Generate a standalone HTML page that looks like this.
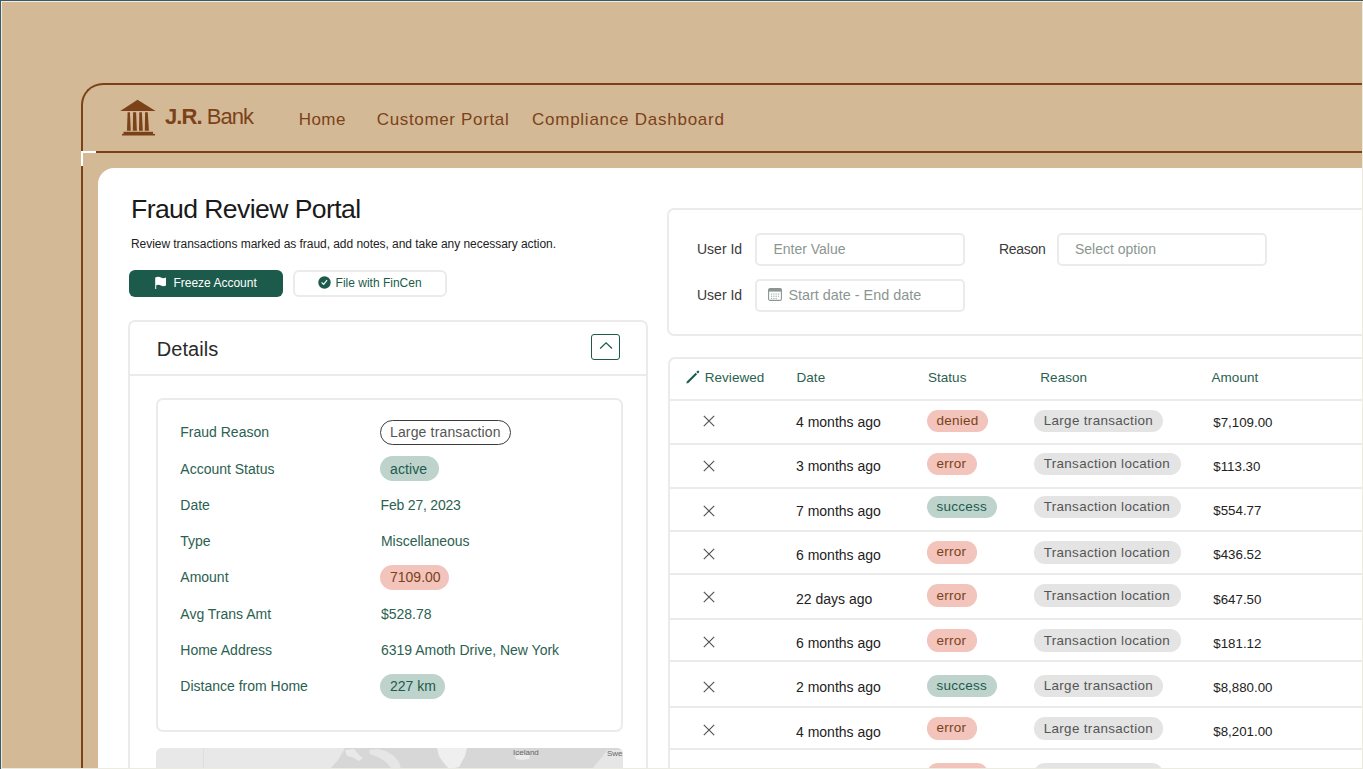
<!DOCTYPE html>
<html><head><meta charset="utf-8"><style>
html,body{margin:0;padding:0;}
body{width:1363px;height:769px;overflow:hidden;position:relative;background:#d4b996;font-family:"Liberation Sans",sans-serif;}
.t{position:absolute;white-space:nowrap;}
.r{position:absolute;}
</style></head><body>
<div class="r" style="left:81px;top:83px;width:1400px;height:800px;border-top:2px solid #7b421a;border-left:2px solid #7b421a;border-top-left-radius:22px;box-sizing:border-box"></div>
<div class="r" style="left:81px;top:151px;width:1400px;height:2px;background:#7b421a"></div>
<div class="r" style="left:81px;top:151px;width:15px;height:2px;background:#fff"></div>
<div class="r" style="left:81px;top:151px;width:2px;height:15px;background:#fff"></div>
<div class="r" style="left:98px;top:168px;width:1400px;height:700px;background:#fff;border-top-left-radius:16px"></div>
<svg class="r" style="left:115px;top:95px" width="45" height="45" viewBox="0 0 45 45">
<polygon points="22.5,4.8 40.6,15.9 5.2,15.9" fill="#7b421a"/>
<polygon points="12.6,17.2 14.9,17.2 15.8,35.8 12.0,35.8" fill="#7b421a"/>
<polygon points="18.1,17.2 21.1,17.2 21.9,35.8 17.8,35.8" fill="#7b421a"/>
<polygon points="24.3,17.2 26.9,17.2 27.8,35.8 24.0,35.8" fill="#7b421a"/>
<polygon points="30.1,17.2 32.8,17.2 33.9,35.8 29.8,35.8" fill="#7b421a"/>
<rect x="8.5" y="36.8" width="29.5" height="2.2" fill="#7b421a"/>
<rect x="7" y="38.9" width="33" height="1.6" fill="#7b421a"/>
</svg>
<div class="t" style="left:165px;top:105.98px;font-size:22px;line-height:22px;color:#7b421a;font-weight:400;letter-spacing:-0.95px;"><b>J.R.</b> Bank</div>
<div class="t" style="left:298.8px;top:110.71px;font-size:17px;line-height:17px;color:#7b421a;font-weight:400;letter-spacing:0.4px;">Home</div>
<div class="t" style="left:376.8px;top:110.71px;font-size:17px;line-height:17px;color:#7b421a;font-weight:400;letter-spacing:0.65px;">Customer Portal</div>
<div class="t" style="left:532px;top:110.71px;font-size:17px;line-height:17px;color:#7b421a;font-weight:400;letter-spacing:0.75px;">Compliance Dashboard</div>
<div class="t" style="left:131px;top:196.28px;font-size:26.6px;line-height:26.6px;color:#1a1a1a;font-weight:400;letter-spacing:-0.6px;">Fraud Review Portal</div>
<div class="t" style="left:131px;top:238.14px;font-size:12px;line-height:12px;color:#222;font-weight:400;letter-spacing:-0.05px;">Review transactions marked as fraud, add notes, and take any necessary action.</div>
<div class="r" style="left:129px;top:269.8px;width:154px;height:27.4px;background:#1c5b4c;border-radius:6px"></div>
<svg class="r" style="left:154px;top:276px" width="14" height="14" viewBox="0 0 14 14">
<path d="M1.2,1.6 C3.5,0.4 5.5,0.6 7,1.5 C8.6,2.4 10.2,2.3 12,1.6 L12,9.6 C10.2,10.3 8.6,10.4 7,9.5 C5.5,8.6 3.5,8.4 2.2,9.3 L2.2,13 L1.2,13 Z" fill="#fff"/>
</svg>
<div class="t" style="left:173.4px;top:276.84px;font-size:12px;line-height:12px;color:#fff;font-weight:400;letter-spacing:0.0px;">Freeze Account</div>
<div class="r" style="left:293px;top:269.8px;width:154px;height:27.4px;border:2px solid #ebebeb;border-radius:6px;box-sizing:border-box;background:#fff"></div>
<svg class="r" style="left:318px;top:276px" width="13" height="13" viewBox="0 0 13 13">
<circle cx="6.5" cy="6.5" r="6.2" fill="#1c5b4c"/>
<path d="M3.6,6.3 L5.6,8.3 L9.1,4.1" stroke="#fff" stroke-width="1.15" fill="none"/>
</svg>
<div class="t" style="left:335.6px;top:276.84px;font-size:12px;line-height:12px;color:#1c5b4c;font-weight:400;letter-spacing:0px;">File with FinCen</div>
<div class="r" style="left:128px;top:319.5px;width:520px;height:500px;border:2px solid #ebebeb;border-radius:7px;box-sizing:border-box"></div>
<div class="r" style="left:128px;top:374px;width:520px;height:2px;background:#ebebeb"></div>
<div class="t" style="left:156.8px;top:339.27px;font-size:20px;line-height:20px;color:#2a2a2a;font-weight:400;letter-spacing:0.05px;">Details</div>
<div class="r" style="left:591px;top:334px;width:29px;height:26px;border:1.3px solid #1c5b4c;border-radius:3px;box-sizing:border-box"></div>
<svg class="r" style="left:598px;top:340px" width="16" height="12" viewBox="0 0 16 12">
<path d="M2.1,8.5 L8.1,2.8 L14,8.5" stroke="#1c5b4c" stroke-width="1.2" fill="none"/>
</svg>
<div class="r" style="left:156px;top:398px;width:467px;height:334px;border:2px solid #ebebeb;border-radius:7px;box-sizing:border-box"></div>
<div class="t" style="left:180.3px;top:425.25px;font-size:14px;line-height:14px;color:#2b6150;font-weight:400;letter-spacing:0px;">Fraud Reason</div>
<div class="t" style="left:180.3px;top:461.55px;font-size:14px;line-height:14px;color:#2b6150;font-weight:400;letter-spacing:0px;">Account Status</div>
<div class="t" style="left:180.3px;top:497.85px;font-size:14px;line-height:14px;color:#2b6150;font-weight:400;letter-spacing:0px;">Date</div>
<div class="t" style="left:180.3px;top:534.15px;font-size:14px;line-height:14px;color:#2b6150;font-weight:400;letter-spacing:0px;">Type</div>
<div class="t" style="left:180.3px;top:570.45px;font-size:14px;line-height:14px;color:#2b6150;font-weight:400;letter-spacing:0px;">Amount</div>
<div class="t" style="left:180.3px;top:606.75px;font-size:14px;line-height:14px;color:#2b6150;font-weight:400;letter-spacing:0px;">Avg Trans Amt</div>
<div class="t" style="left:180.3px;top:643.05px;font-size:14px;line-height:14px;color:#2b6150;font-weight:400;letter-spacing:0px;">Home Address</div>
<div class="t" style="left:180.3px;top:679.35px;font-size:14px;line-height:14px;color:#2b6150;font-weight:400;letter-spacing:0px;">Distance from Home</div>
<div class="r" style="left:380px;top:420px;width:131px;height:25px;border:1.3px solid #3d3d3d;border-radius:13px;box-sizing:border-box"></div>
<div class="t" style="left:390px;top:425.25px;font-size:14px;line-height:14px;color:#555;font-weight:400;letter-spacing:0.15px;">Large transaction</div>
<div class="r" style="left:380px;top:456px;width:59px;height:25px;background:#bdd3cc;border-radius:13px"></div>
<div class="t" style="left:390px;top:461.55px;font-size:14px;line-height:14px;color:#1c5b4c;font-weight:400;letter-spacing:0.1px;">active</div>
<div class="t" style="left:380.6px;top:497.85px;font-size:14px;line-height:14px;color:#2b6150;font-weight:400;letter-spacing:-0.2px;">Feb 27, 2023</div>
<div class="t" style="left:380.9px;top:534.15px;font-size:14px;line-height:14px;color:#2b6150;font-weight:400;letter-spacing:0px;">Miscellaneous</div>
<div class="r" style="left:380px;top:565px;width:68.5px;height:25px;background:#f2c4bb;border-radius:13px"></div>
<div class="t" style="left:390px;top:570.45px;font-size:14px;line-height:14px;color:#7b421a;font-weight:400;letter-spacing:0px;">7109.00</div>
<div class="t" style="left:380.9px;top:606.75px;font-size:14px;line-height:14px;color:#2b6150;font-weight:400;letter-spacing:0px;">$528.78</div>
<div class="t" style="left:380.9px;top:643.05px;font-size:14px;line-height:14px;color:#2b6150;font-weight:400;letter-spacing:0px;">6319 Amoth Drive, New York</div>
<div class="r" style="left:380px;top:674px;width:64.5px;height:25px;background:#bdd3cc;border-radius:13px"></div>
<div class="t" style="left:390px;top:679.35px;font-size:14px;line-height:14px;color:#1c5b4c;font-weight:400;letter-spacing:0px;">227 km</div>
<div class="r" style="left:156px;top:748px;width:467px;height:21px;border-radius:6px 6px 0 0;overflow:hidden;background:#e8e8e8">
<svg width="467" height="21" viewBox="0 0 467 21" style="display:block">
<rect x="0" y="0" width="467" height="21" fill="#e8e8e8"/>
<line x1="47.5" y1="0" x2="47.5" y2="21" stroke="#dadada" stroke-width="0.8"/>
<polygon points="189,0 467,0 467,21 174,21 182,12" fill="#d7d7d7"/>
<polygon points="189,2 198,1 204,8 207,10 203,13 196,9 191,8" fill="#e9e9e9"/>
<polygon points="213,2 222,1 230,3 238,8 243,14 245,21 236,21 230,14 222,9 214,6" fill="#e6e6e6"/>
<polygon points="281,0 311,0 309,8 303,19 293,21 287,14 283,8" fill="#efefef"/>
<polygon points="359,8 366,6 374,7 373,11 365,12 360,11" fill="#ebebeb"/>
<polygon points="436,21 446,9 451,2 467,2 467,21" fill="#e6e6e6"/>
<text x="357" y="7" font-family="Liberation Sans" font-size="8" fill="#666">Iceland</text>
<text x="451" y="8" font-family="Liberation Sans" font-size="8" fill="#666">Swe</text>
</svg></div>
<div class="r" style="left:667px;top:208px;width:800px;height:128px;border:2px solid #ebebeb;border-radius:7px;box-sizing:border-box"></div>
<div class="t" style="left:697px;top:242.15px;font-size:14px;line-height:14px;color:#3a3a3a;font-weight:400;letter-spacing:0px;">User Id</div>
<div class="r" style="left:755px;top:232.5px;width:210px;height:33px;border:2px solid #ebebeb;border-radius:5px;box-sizing:border-box"></div>
<div class="t" style="left:773.4px;top:242.15px;font-size:14px;line-height:14px;color:#8c9691;font-weight:400;letter-spacing:0px;">Enter Value</div>
<div class="t" style="left:999px;top:242.15px;font-size:14px;line-height:14px;color:#3a3a3a;font-weight:400;letter-spacing:-0.3px;">Reason</div>
<div class="r" style="left:1057px;top:232.5px;width:210px;height:33px;border:2px solid #ebebeb;border-radius:5px;box-sizing:border-box"></div>
<div class="t" style="left:1075px;top:242.15px;font-size:14px;line-height:14px;color:#8c9691;font-weight:400;letter-spacing:0px;">Select option</div>
<div class="t" style="left:697px;top:287.95px;font-size:14px;line-height:14px;color:#3a3a3a;font-weight:400;letter-spacing:0px;">User Id</div>
<div class="r" style="left:755px;top:278.5px;width:210px;height:33px;border:2px solid #ebebeb;border-radius:5px;box-sizing:border-box"></div>
<svg class="r" style="left:768px;top:288px" width="14" height="13" viewBox="0 0 14 13">
<rect x="0.6" y="0.6" width="12.8" height="11.8" rx="1.5" fill="none" stroke="#8c9691" stroke-width="1.1"/>
<rect x="0.6" y="0.6" width="12.8" height="3" fill="#8c9691"/>
<g fill="#9aa39f"><rect x="3" y="5.5" width="1.2" height="1"/><rect x="5.3" y="5.5" width="1.2" height="1"/><rect x="7.6" y="5.5" width="1.2" height="1"/><rect x="9.9" y="5.5" width="1.2" height="1"/>
<rect x="3" y="7.7" width="1.2" height="1"/><rect x="5.3" y="7.7" width="1.2" height="1"/><rect x="7.6" y="7.7" width="1.2" height="1"/><rect x="9.9" y="7.7" width="1.2" height="1"/>
<rect x="3" y="9.9" width="1.2" height="1"/><rect x="5.3" y="9.9" width="1.2" height="1"/><rect x="7.6" y="9.9" width="1.2" height="1"/></g>
</svg>
<div class="t" style="left:788.4px;top:287.61px;font-size:14.4px;line-height:14.4px;color:#8c9691;font-weight:400;letter-spacing:0px;">Start date - End date</div>
<div class="r" style="left:668px;top:357px;width:800px;height:500px;border:2px solid #ebebeb;border-radius:7px;box-sizing:border-box"></div>
<div class="r" style="left:668px;top:399px;width:800px;height:2px;background:#ebebeb"></div>
<div class="r" style="left:668px;top:443px;width:800px;height:2px;background:#ebebeb"></div>
<div class="r" style="left:668px;top:487px;width:800px;height:2px;background:#ebebeb"></div>
<div class="r" style="left:668px;top:530px;width:800px;height:2px;background:#ebebeb"></div>
<div class="r" style="left:668px;top:573px;width:800px;height:2px;background:#ebebeb"></div>
<div class="r" style="left:668px;top:618px;width:800px;height:2px;background:#ebebeb"></div>
<div class="r" style="left:668px;top:660px;width:800px;height:2px;background:#ebebeb"></div>
<div class="r" style="left:668px;top:706px;width:800px;height:2px;background:#ebebeb"></div>
<div class="r" style="left:668px;top:748px;width:800px;height:2px;background:#ebebeb"></div>
<svg class="r" style="left:686px;top:370px" width="14" height="14" viewBox="0 0 14 14">
<path d="M0.4,13.4 L0.9,11.4 L9.6,2.7 L11.1,4.2 L2.4,12.9 Z" fill="#1c5b4c"/>
<path d="M10.3,2.0 L11.6,0.7 Q12.3,0.3 12.9,0.9 Q13.5,1.6 13.0,2.3 L11.8,3.5 Z" fill="#1c5b4c"/>
</svg>
<div class="t" style="left:704.7px;top:370.67px;font-size:13.5px;line-height:13.5px;color:#2b6150;font-weight:400;letter-spacing:0.05px;">Reviewed</div>
<div class="t" style="left:796.5px;top:370.67px;font-size:13.5px;line-height:13.5px;color:#2b6150;font-weight:400;letter-spacing:0.05px;">Date</div>
<div class="t" style="left:927.9px;top:370.67px;font-size:13.5px;line-height:13.5px;color:#2b6150;font-weight:400;letter-spacing:0.05px;">Status</div>
<div class="t" style="left:1040.3px;top:370.67px;font-size:13.5px;line-height:13.5px;color:#2b6150;font-weight:400;letter-spacing:0.05px;">Reason</div>
<div class="t" style="left:1211.5px;top:370.67px;font-size:13.5px;line-height:13.5px;color:#2b6150;font-weight:400;letter-spacing:0.05px;">Amount</div>
<svg class="r" style="left:703.2px;top:414.5px" width="12" height="12" viewBox="0 0 12 12">
<path d="M0.8,0.8 L11.2,11.2 M11.2,0.8 L0.8,11.2" stroke="#555" stroke-width="1.2"/></svg>
<div class="t" style="left:796px;top:415.15px;font-size:14px;line-height:14px;color:#222;font-weight:400;letter-spacing:0px;">4 months ago</div>
<div class="t" style="left:1213.3px;top:415.74px;font-size:13.3px;line-height:13.3px;color:#222;font-weight:400;letter-spacing:0px;">$7,109.00</div>
<div class="r" style="left:927px;top:410.1px;width:61px;height:22.3px;background:#f2c4bb;border-radius:11px"></div>
<div class="t" style="left:936.5px;top:414.27px;font-size:13.5px;line-height:13.5px;color:#7b421a;font-weight:400;letter-spacing:0.25px;">denied</div>
<div class="r" style="left:1034px;top:410.1px;width:129px;height:22.3px;background:#e4e4e4;border-radius:11px"></div>
<div class="t" style="left:1043.7px;top:414.36px;font-size:13.4px;line-height:13.4px;color:#555;font-weight:400;letter-spacing:0.35px;">Large transaction</div>
<svg class="r" style="left:703.2px;top:460.0px" width="12" height="12" viewBox="0 0 12 12">
<path d="M0.8,0.8 L11.2,11.2 M11.2,0.8 L0.8,11.2" stroke="#555" stroke-width="1.2"/></svg>
<div class="t" style="left:796px;top:459.35px;font-size:14px;line-height:14px;color:#222;font-weight:400;letter-spacing:0px;">3 months ago</div>
<div class="t" style="left:1213.3px;top:459.94px;font-size:13.3px;line-height:13.3px;color:#222;font-weight:400;letter-spacing:0px;">$113.30</div>
<div class="r" style="left:927px;top:453.2px;width:49.5px;height:22.3px;background:#f2c4bb;border-radius:11px"></div>
<div class="t" style="left:936.5px;top:457.37px;font-size:13.5px;line-height:13.5px;color:#7b421a;font-weight:400;letter-spacing:0.25px;">error</div>
<div class="r" style="left:1034px;top:453.2px;width:147px;height:22.3px;background:#e4e4e4;border-radius:11px"></div>
<div class="t" style="left:1043.7px;top:457.46px;font-size:13.4px;line-height:13.4px;color:#555;font-weight:400;letter-spacing:0.35px;">Transaction location</div>
<svg class="r" style="left:703.2px;top:505.3px" width="12" height="12" viewBox="0 0 12 12">
<path d="M0.8,0.8 L11.2,11.2 M11.2,0.8 L0.8,11.2" stroke="#555" stroke-width="1.2"/></svg>
<div class="t" style="left:796px;top:503.55px;font-size:14px;line-height:14px;color:#222;font-weight:400;letter-spacing:0px;">7 months ago</div>
<div class="t" style="left:1213.3px;top:504.14px;font-size:13.3px;line-height:13.3px;color:#222;font-weight:400;letter-spacing:0px;">$554.77</div>
<div class="r" style="left:927px;top:496.0px;width:70px;height:22.3px;background:#bdd3cc;border-radius:11px"></div>
<div class="t" style="left:936.5px;top:500.17px;font-size:13.5px;line-height:13.5px;color:#1c5b4c;font-weight:400;letter-spacing:0.25px;">success</div>
<div class="r" style="left:1034px;top:496.0px;width:147px;height:22.3px;background:#e4e4e4;border-radius:11px"></div>
<div class="t" style="left:1043.7px;top:500.26px;font-size:13.4px;line-height:13.4px;color:#555;font-weight:400;letter-spacing:0.35px;">Transaction location</div>
<svg class="r" style="left:703.2px;top:547.6px" width="12" height="12" viewBox="0 0 12 12">
<path d="M0.8,0.8 L11.2,11.2 M11.2,0.8 L0.8,11.2" stroke="#555" stroke-width="1.2"/></svg>
<div class="t" style="left:796px;top:547.75px;font-size:14px;line-height:14px;color:#222;font-weight:400;letter-spacing:0px;">6 months ago</div>
<div class="t" style="left:1213.3px;top:548.34px;font-size:13.3px;line-height:13.3px;color:#222;font-weight:400;letter-spacing:0px;">$436.52</div>
<div class="r" style="left:927px;top:541.3px;width:49.5px;height:22.3px;background:#f2c4bb;border-radius:11px"></div>
<div class="t" style="left:936.5px;top:545.47px;font-size:13.5px;line-height:13.5px;color:#7b421a;font-weight:400;letter-spacing:0.25px;">error</div>
<div class="r" style="left:1034px;top:541.3px;width:147px;height:22.3px;background:#e4e4e4;border-radius:11px"></div>
<div class="t" style="left:1043.7px;top:545.56px;font-size:13.4px;line-height:13.4px;color:#555;font-weight:400;letter-spacing:0.35px;">Transaction location</div>
<svg class="r" style="left:703.2px;top:590.5px" width="12" height="12" viewBox="0 0 12 12">
<path d="M0.8,0.8 L11.2,11.2 M11.2,0.8 L0.8,11.2" stroke="#555" stroke-width="1.2"/></svg>
<div class="t" style="left:796px;top:591.95px;font-size:14px;line-height:14px;color:#222;font-weight:400;letter-spacing:0px;">22 days ago</div>
<div class="t" style="left:1213.3px;top:592.54px;font-size:13.3px;line-height:13.3px;color:#222;font-weight:400;letter-spacing:0px;">$647.50</div>
<div class="r" style="left:927px;top:584.4px;width:49.5px;height:22.3px;background:#f2c4bb;border-radius:11px"></div>
<div class="t" style="left:936.5px;top:588.57px;font-size:13.5px;line-height:13.5px;color:#7b421a;font-weight:400;letter-spacing:0.25px;">error</div>
<div class="r" style="left:1034px;top:584.4px;width:147px;height:22.3px;background:#e4e4e4;border-radius:11px"></div>
<div class="t" style="left:1043.7px;top:588.66px;font-size:13.4px;line-height:13.4px;color:#555;font-weight:400;letter-spacing:0.35px;">Transaction location</div>
<svg class="r" style="left:703.2px;top:635.8px" width="12" height="12" viewBox="0 0 12 12">
<path d="M0.8,0.8 L11.2,11.2 M11.2,0.8 L0.8,11.2" stroke="#555" stroke-width="1.2"/></svg>
<div class="t" style="left:796px;top:636.15px;font-size:14px;line-height:14px;color:#222;font-weight:400;letter-spacing:0px;">6 months ago</div>
<div class="t" style="left:1213.3px;top:636.74px;font-size:13.3px;line-height:13.3px;color:#222;font-weight:400;letter-spacing:0px;">$181.12</div>
<div class="r" style="left:927px;top:629.4px;width:49.5px;height:22.3px;background:#f2c4bb;border-radius:11px"></div>
<div class="t" style="left:936.5px;top:633.57px;font-size:13.5px;line-height:13.5px;color:#7b421a;font-weight:400;letter-spacing:0.25px;">error</div>
<div class="r" style="left:1034px;top:629.4px;width:147px;height:22.3px;background:#e4e4e4;border-radius:11px"></div>
<div class="t" style="left:1043.7px;top:633.66px;font-size:13.4px;line-height:13.4px;color:#555;font-weight:400;letter-spacing:0.35px;">Transaction location</div>
<svg class="r" style="left:703.2px;top:681.4px" width="12" height="12" viewBox="0 0 12 12">
<path d="M0.8,0.8 L11.2,11.2 M11.2,0.8 L0.8,11.2" stroke="#555" stroke-width="1.2"/></svg>
<div class="t" style="left:796px;top:680.35px;font-size:14px;line-height:14px;color:#222;font-weight:400;letter-spacing:0px;">2 months ago</div>
<div class="t" style="left:1213.3px;top:680.94px;font-size:13.3px;line-height:13.3px;color:#222;font-weight:400;letter-spacing:0px;">$8,880.00</div>
<div class="r" style="left:927px;top:674.6px;width:70px;height:22.3px;background:#bdd3cc;border-radius:11px"></div>
<div class="t" style="left:936.5px;top:678.77px;font-size:13.5px;line-height:13.5px;color:#1c5b4c;font-weight:400;letter-spacing:0.25px;">success</div>
<div class="r" style="left:1034px;top:674.6px;width:129px;height:22.3px;background:#e4e4e4;border-radius:11px"></div>
<div class="t" style="left:1043.7px;top:678.86px;font-size:13.4px;line-height:13.4px;color:#555;font-weight:400;letter-spacing:0.35px;">Large transaction</div>
<svg class="r" style="left:703.2px;top:724.0px" width="12" height="12" viewBox="0 0 12 12">
<path d="M0.8,0.8 L11.2,11.2 M11.2,0.8 L0.8,11.2" stroke="#555" stroke-width="1.2"/></svg>
<div class="t" style="left:796px;top:724.55px;font-size:14px;line-height:14px;color:#222;font-weight:400;letter-spacing:0px;">4 months ago</div>
<div class="t" style="left:1213.3px;top:725.14px;font-size:13.3px;line-height:13.3px;color:#222;font-weight:400;letter-spacing:0px;">$8,201.00</div>
<div class="r" style="left:927px;top:717.3px;width:49.5px;height:22.3px;background:#f2c4bb;border-radius:11px"></div>
<div class="t" style="left:936.5px;top:721.47px;font-size:13.5px;line-height:13.5px;color:#7b421a;font-weight:400;letter-spacing:0.25px;">error</div>
<div class="r" style="left:1034px;top:717.3px;width:129px;height:22.3px;background:#e4e4e4;border-radius:11px"></div>
<div class="t" style="left:1043.7px;top:721.56px;font-size:13.4px;line-height:13.4px;color:#555;font-weight:400;letter-spacing:0.35px;">Large transaction</div>
<div class="r" style="left:927px;top:762.8px;width:61px;height:22.3px;background:#f2c4bb;border-radius:11px"></div>
<div class="r" style="left:1034px;top:762.8px;width:129px;height:22.3px;background:#e4e4e4;border-radius:11px"></div>
<div class="r" style="left:0px;top:0px;width:1363px;height:1px;background:#3b5a66"></div>
<div class="r" style="left:0px;top:0px;width:1px;height:769px;background:#3b5a66"></div>
<div class="r" style="left:1px;top:1px;width:1362px;height:1px;background:#f3ecdc"></div>
<div class="r" style="left:1px;top:1px;width:1px;height:768px;background:#f3ecdc"></div>
<div class="r" style="left:1362px;top:1px;width:1px;height:768px;background:#ebebe0"></div>
<div class="r" style="left:1px;top:768px;width:1362px;height:1px;background:#ebebe0"></div>
</body></html>
